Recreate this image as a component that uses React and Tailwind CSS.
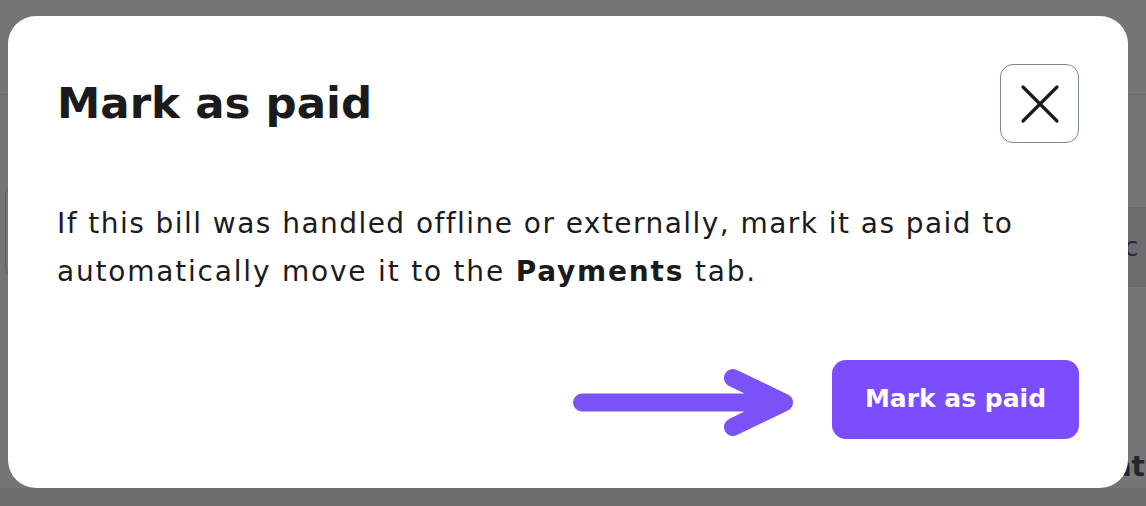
function ArrowGraphic() {
    return (
        <svg width="222" height="80" viewBox="0 0 222 80" className="shrink-0">
            <path
                d="M10 43.5 H205 M161 19 L212 43.5 L161 68"
                fill="none"
                stroke="#7b52f8"
                strokeWidth="18"
                strokeLinecap="round"
                strokeLinejoin="round"
            />
        </svg>
    );
}

function CloseIcon() {
    return (
        <svg width="40" height="40" viewBox="0 0 40 40">
            <path d="M3 3 L37 37 M37 3 L3 37" stroke="#1b1b1d" strokeWidth="3.2" strokeLinecap="round" />
        </svg>
    );
}

export default function App() {
    return (
        <div className="relative h-[506px] w-full overflow-hidden bg-[#757577] font-['DejaVu_Sans',sans-serif]">
            {/* page behind the overlay */}
            <div className="absolute left-0 right-0 top-[94px] h-px bg-[#6a6a6c]" />
            <div className="absolute left-[5px] top-[186px] h-[90px] w-[22px] rounded-lg border border-[#5f6065]" />
            <div className="absolute right-0 top-[207px] flex h-[80px] w-[40px] items-center bg-[#6c6c6e] pl-[2px] text-[26px] text-[#2a2b30]">
                ac
            </div>
            <div className="absolute right-[1px] top-[446px] text-[28px] font-bold text-[#25262b]">at</div>
            <div className="absolute bottom-0 left-0 right-0 h-[18px] bg-[#6d6d6f]" />

            {/* modal */}
            <div className="relative ml-2 mt-4 flex w-[1120px] flex-col rounded-[28px] bg-white px-[49px] pb-[49px] pt-[48px] text-[#1b1b1d]">
                <div className="flex items-center justify-between">
                    <h2 className="text-[43.5px] font-bold leading-none">Mark as paid</h2>
                    <button className="flex h-[79px] w-[79px] items-center justify-center rounded-[13px] border-[1.5px] border-[#7d8696] bg-white">
                        <CloseIcon />
                    </button>
                </div>
                <p className="mt-[57px] text-[28px] leading-[48px] tracking-[1.45px] text-[#1b1b1d]">
                    If this bill was handled offline or externally, mark it as paid to
                    <br />
                    <span className="tracking-[1.8px]">automatically move it to the </span>
                    <span className="font-bold tracking-[1.8px]">Payments</span>
                    <span className="tracking-[1.8px]"> tab.</span>
                </p>
                <div className="mt-[63px] flex items-center justify-end gap-[38px]">
                    <ArrowGraphic />
                    <button className="flex h-[79px] w-[247px] items-center justify-center rounded-[14px] bg-[#7b4dff] text-[25px] font-bold text-white">
                        Mark as paid
                    </button>
                </div>
            </div>
        </div>
    );
}
